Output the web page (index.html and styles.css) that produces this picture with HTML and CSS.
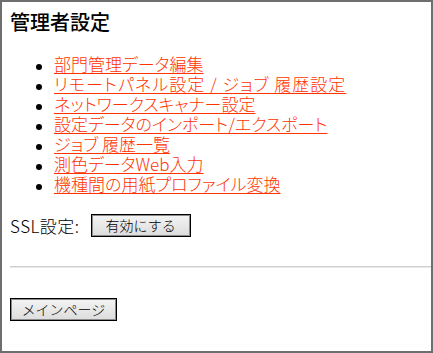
FILE: index.html
```html
<!DOCTYPE html>
<html lang="ja">
<head>
<meta charset="utf-8">
<title>管理者設定</title>
<link rel="stylesheet" href="styles.css">
</head>
<body>
<div class="page">
  <h2 class="title">管理者設定</h2>
  <ul class="menu">
    <li><a href="#">部門管理データ編集</a></li>
    <li><a href="#" class="wide">リモートパネル設定 / ジョブ 履歴設定</a></li>
    <li><a href="#">ネットワークスキャナー設定</a></li>
    <li><a href="#">設定データのインポート/エクスポート</a></li>
    <li><a href="#">ジョブ 履歴一覧</a></li>
    <li><a href="#">測色データWeb入力</a></li>
    <li><a href="#">機種間の用紙プロファイル変換</a></li>
  </ul>
  <div class="ssl">
    <span class="ssl-label">SSL設定:</span>
    <button class="btn btn-ssl" type="button">有効にする</button>
  </div>
  <hr class="sep">
  <button class="btn btn-main" type="button">メインページ</button>
</div>
</body>
</html>
```
FILE: styles.css
```css
html, body {
  margin: 0;
  padding: 0;
  background: #ffffff;
}
.page {
  box-sizing: border-box;
  width: 433px;
  height: 353px;
  border: 2px solid #6e6e6e;
  padding: 0 0 0 8px;
  font-family: "Noto Sans CJK JP", "Noto Sans", sans-serif;
  color: #000;
  overflow: hidden;
}
.title {
  margin: 8px 0 0 0;
  font-size: 20px;
  line-height: 24px;
  font-weight: 500;
}
.menu {
  margin: 20px 0 0 0;
  padding: 0 0 0 44px;
  list-style: none;
  font-size: 17px;
  line-height: 20px;
  font-weight: 300;
  font-feature-settings: "palt" 1;
}
.menu li {
  height: 20px;
  white-space: nowrap;
}
.menu li::before {
  content: "";
  display: inline-block;
  width: 6px;
  height: 6px;
  border-radius: 50%;
  background: #000;
  margin-left: -18px;
  margin-right: 12px;
  vertical-align: 1px;
}
.menu a {
  color: #ff3300;
  text-decoration: underline;
  text-decoration-thickness: 1px;
  text-underline-offset: 2px;
}
.menu a.wide {
  letter-spacing: 1px;
}
.ssl {
  display: flex;
  align-items: center;
  gap: 11px;
  margin-top: 20px;
  height: 23px;
}
.ssl-label {
  font-size: 17px;
  line-height: 20px;
  font-weight: 300;
  letter-spacing: 0.5px;
}
.btn {
  box-sizing: border-box;
  height: 23px;
  padding: 0;
  border: 1px solid #000;
  box-shadow: inset 0 0 0 1px #8a8a8a;
  background: linear-gradient(#f4f4f4, #dcdcdc);
  font-family: "Noto Sans CJK JP", "Noto Sans", sans-serif;
  font-size: 14px;
  font-weight: 300;
  line-height: 19px;
  color: #000;
  display: block;
}
.btn-ssl {
  width: 100px;
}
.btn-main {
  width: 107px;
  margin-top: 30px;
}
.sep {
  margin: 29px 0 0 0;
  border: 0;
  height: 0;
  border-top: 1px solid #cfcfcf;
  border-bottom: 1px solid #e8e8e8;
}
```
